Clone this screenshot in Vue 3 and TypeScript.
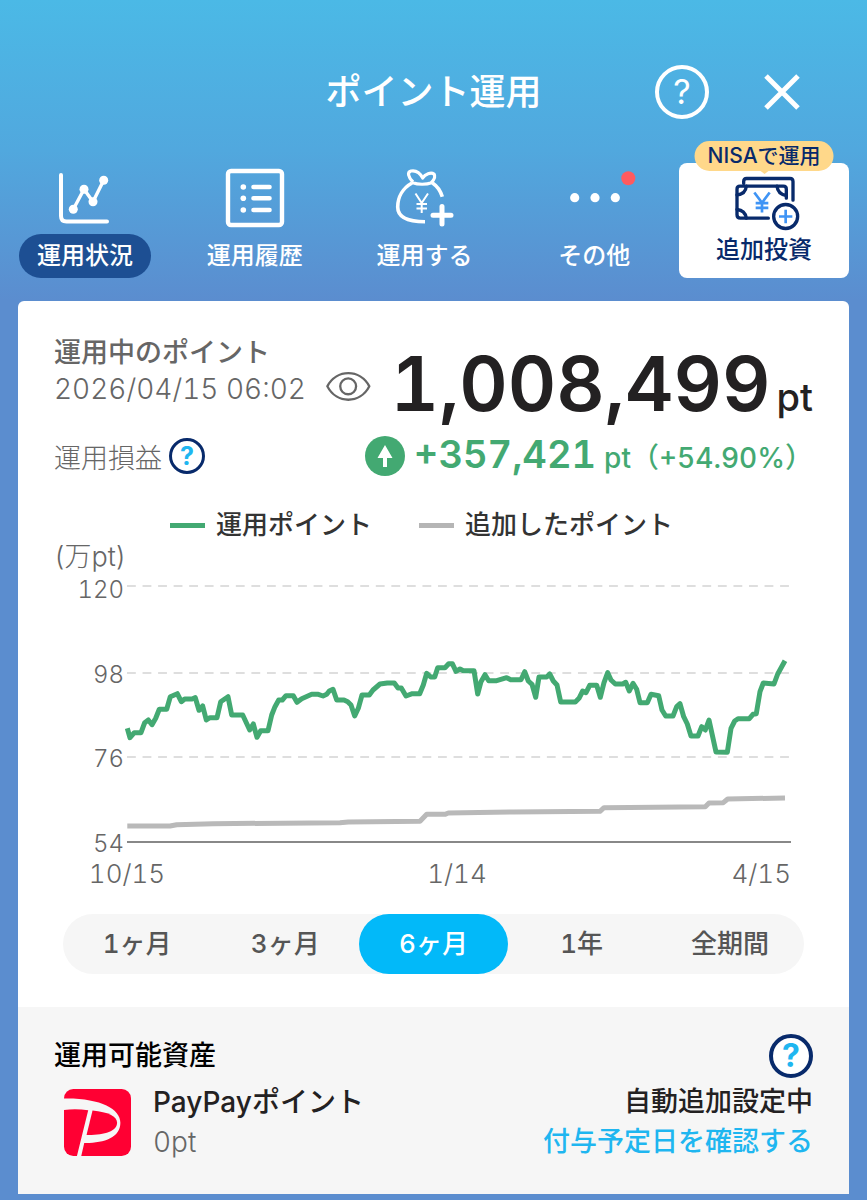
<script setup lang="ts">
import { ref } from 'vue'

type Point = [number, number]

const periods = ['1ヶ月', '3ヶ月', '6ヶ月', '1年', '全期間']
const selected = ref('6ヶ月')
const activeTab = ref('status')

// Series are sampled at three units per chart pixel.
const SAMPLE = 3
const invested: Point[] = [
  [262, 685], [270, 713], [283, 698], [303, 698], [314, 668], [325, 660], [336, 674], [347, 655],
  [358, 628], [380, 628], [391, 590], [412, 581], [424, 605], [434, 597], [456, 597], [466, 593],
  [477, 631], [488, 618], [499, 660], [510, 653], [531, 653], [542, 605], [564, 590], [575, 645],
  [608, 645], [629, 690], [640, 672], [651, 712], [662, 692], [684, 692], [695, 645], [705, 620],
  [716, 600], [727, 600], [738, 587], [760, 587], [771, 607], [785, 596], [815, 583], [835, 583],
  [849, 588], [860, 583], [868, 573], [879, 568], [890, 600], [912, 600], [923, 605], [933, 615],
  [944, 648], [955, 625], [966, 585], [988, 585], [999, 570], [1020, 552], [1042, 549], [1063, 549],
  [1074, 564], [1084, 564], [1098, 588], [1117, 581], [1139, 581], [1150, 555], [1160, 520],
  [1172, 531], [1184, 531], [1193, 503], [1215, 503], [1226, 491], [1237, 491], [1248, 514],
  [1260, 507], [1270, 512], [1302, 512], [1313, 582], [1323, 545], [1335, 524], [1346, 542],
  [1370, 542], [1400, 533], [1412, 539], [1443, 539], [1454, 515], [1465, 543], [1476, 553],
  [1487, 592], [1497, 531], [1520, 531], [1529, 522], [1540, 543], [1551, 555], [1562, 606],
  [1606, 606], [1617, 595], [1628, 573], [1638, 578], [1649, 556], [1670, 556], [1681, 592],
  [1692, 548], [1703, 518], [1713, 540], [1726, 552], [1748, 552], [1757, 547], [1768, 573],
  [1779, 550], [1790, 568], [1800, 608], [1822, 608], [1833, 583], [1856, 587], [1866, 630],
  [1877, 648], [1899, 648], [1910, 620], [1920, 611], [1931, 650], [1942, 672], [1953, 708],
  [1974, 708], [1985, 680], [1996, 690], [2007, 660], [2028, 756], [2062, 757], [2073, 685],
  [2084, 663], [2094, 656], [2128, 656], [2139, 643], [2149, 641], [2160, 575], [2170, 549],
  [2202, 552], [2213, 522], [2235, 482],
]
const added: Point[] = [
  [262, 978], [390, 978], [410, 974], [520, 971], [900, 968], [925, 966], [1140, 964], [1160, 943],
  [1215, 943], [1225, 939], [1420, 936], [1680, 934], [1692, 923], [1996, 920], [2007, 909],
  [2050, 908], [2063, 897], [2235, 894],
]

const toPoints = (series: Point[]): string =>
  series.map(([x, y]) => `${(x / SAMPLE - 14).toFixed(1)},${(y / SAMPLE - 70).toFixed(1)}`).join(' ')

const gridLines = [
  { label: '120', y: 16, baseline: 28 },
  { label: '98', y: 103, baseline: 113 },
  { label: '76', y: 187, baseline: 197 },
  { label: '54', y: 272, baseline: 282 },
]
</script>

<template>
  <div class="app">
    <header class="header">
      <h1 class="title">ポイント運用</h1>
      <div class="actions">
        <button class="help-light" type="button" aria-label="ヘルプ">?</button>
        <button class="close" type="button" aria-label="閉じる">
          <svg viewBox="0 0 36 36" width="36" height="36"><path d="M2 2L34 34M34 2L2 34" stroke="#fff" stroke-width="5" /></svg>
        </button>
      </div>
    </header>

    <nav class="tabs">
      <button class="tab" :class="{ active: activeTab === 'status' }" type="button" @click="activeTab = 'status'">
        <svg class="tab-icon" viewBox="0 0 60 60">
          <path d="M6 7V48Q6 53.5 11.5 53.5H52" stroke-width="4" />
          <path d="M18.3 41.3L29 21.3L38 33.7L48.7 12.3" stroke-width="3.4" />
          <g class="solid"><circle cx="18.3" cy="41.3" r="4.5" /><circle cx="29" cy="21.3" r="4.5" /><circle cx="38" cy="33.7" r="4.5" /><circle cx="48.7" cy="12.3" r="4.5" /></g>
        </svg>
        <span class="tab-label">運用状況</span>
      </button>
      <button class="tab" :class="{ active: activeTab === 'history' }" type="button" @click="activeTab = 'history'">
        <svg class="tab-icon" viewBox="0 0 60 60">
          <rect x="3" y="3" width="54" height="54" rx="3" stroke-width="4.4" />
          <path d="M28.5 19H44.5M28.5 30.3H44.5M28.5 42H44.5" stroke-width="4.6" />
          <g class="solid"><circle cx="18.3" cy="19" r="2.8" /><circle cx="18.3" cy="30.3" r="2.8" /><circle cx="18.3" cy="42" r="2.8" /></g>
        </svg>
        <span class="tab-label">運用履歴</span>
      </button>
      <button class="tab" :class="{ active: activeTab === 'invest' }" type="button" @click="activeTab = 'invest'">
        <svg class="tab-icon butt" viewBox="0 0 60 60">
          <path d="M18 15C9 20 3.7 29 3.7 39C3.7 50 14 53.7 31 53.7M38.5 15C43 18 46.500 23 48.3 28.7" stroke-width="3.6" />
          <path d="M18 14.5Q28 18 38.5 14.5M19 14C14 9 13 4 17 3C22 2 26 5 28.7 10C31 6 37 4 40 6C42 9 40 12 37 15" stroke-width="3.2" />
          <path d="M21.5 25.5L27.7 35L34 25.5M27.7 35V45M22.5 36H33M22.5 40.5H33" stroke-width="2" />
          <path class="round" d="M48 38.5V56M39 47.3H57" stroke-width="5" />
        </svg>
        <span class="tab-label">運用する</span>
      </button>
      <button class="tab" :class="{ active: activeTab === 'other' }" type="button" @click="activeTab = 'other'">
        <svg class="tab-icon" viewBox="0 0 60 60">
          <g class="solid"><circle cx="10.7" cy="29.7" r="4.6" /><circle cx="31" cy="29.7" r="4.6" /><circle cx="51.3" cy="29.7" r="4.6" /></g>
          <circle class="notice" cx="64.3" cy="10.3" r="7" />
        </svg>
        <span class="tab-label">その他</span>
      </button>
      <a class="nisa" href="#nisa">
        <span class="nisa-badge">NISAで運用</span>
        <svg class="nisa-icon" viewBox="334 408 198 164" width="66" height="55" fill="none" stroke="#082a6b" stroke-width="10" stroke-linecap="round">
          <path d="M372 430V424Q372 415 381 415H511Q520 415 520 424V480" />
          <path d="M446 534H362Q352 534 352 524V447Q352 438 361 438H491Q500 438 500 447V474" />
          <path d="M380 438Q378 462 352 464M472 438Q474 462 500 466M352 508Q376 510 380 534" />
          <circle cx="498" cy="529" r="36" />
          <g stroke="#3f94f5" stroke-width="8" stroke-linecap="butt">
            <path d="M478 529H518M498 509V549M404 457L427 488L450 457M427 487V517M408 489H446M408 503H446" />
          </g>
        </svg>
        <span class="nisa-label">追加投資</span>
      </a>
    </nav>

    <main class="card">
      <section class="overview">
        <div class="balance">
          <div>
            <h2 class="balance-title">運用中のポイント</h2>
            <div class="updated">
              <time datetime="2026-04-15T06:02">2026/04/15 06:02</time>
              <button class="eye" type="button" aria-label="表示を切り替える">
                <svg viewBox="880 146 136 93" width="45" height="31" fill="none" stroke="#666" stroke-width="7">
                  <path d="M884 192C912 139 983 139 1011 192C983 246 912 246 884 192Z" stroke-linejoin="round" />
                  <circle cx="947" cy="192" r="24" />
                </svg>
              </button>
            </div>
          </div>
          <p class="amount">1,008,499<span class="amount-unit">pt</span></p>
        </div>

        <div class="profit">
          <div class="profit-name">
            <span>運用損益</span>
            <button class="help" type="button" aria-label="運用損益について">?</button>
          </div>
          <p class="gain">
            <svg viewBox="0 0 40 40" width="40" height="40">
              <circle cx="20" cy="20" r="20" fill="#43a972" />
              <path d="M20 9L27.5 22H22V31H18V22H12.5Z" fill="#fff" />
            </svg>
            <span class="gain-text">+357,421<span class="gain-unit">pt</span><span class="gain-rate">（+54.90%）</span></span>
          </p>
        </div>

        <div class="legend">
          <span class="legend-item"><i class="swatch green"></i>運用ポイント</span>
          <span class="legend-item"><i class="swatch gray"></i>追加したポイント</span>
        </div>

        <div class="unit">(万pt)</div>
        <svg class="chart" viewBox="0 0 759 324" role="img" aria-label="運用ポイントの推移">
          <g v-for="(line, i) in gridLines" :key="line.label">
            <line x1="73" x2="737" :y1="line.y" :y2="line.y" pathLength="1281" :class="i === gridLines.length - 1 ? 'axis' : 'grid'" />
            <text class="y-label" x="70" :y="line.baseline">{{ line.label }}</text>
          </g>
          <polyline class="line-added" :points="toPoints(added)" />
          <polyline class="line-invested" :points="toPoints(invested)" />
          <text class="x-label" x="73" y="313" text-anchor="middle">10/15</text>
          <text class="x-label" x="403" y="313" text-anchor="middle">1/14</text>
          <text class="x-label" x="737" y="313" text-anchor="end">4/15</text>
        </svg>

        <div class="periods">
          <button
            v-for="period in periods"
            :key="period"
            class="period"
            :class="{ selected: period === selected }"
            :aria-pressed="period === selected"
            type="button"
            @click="selected = period"
          >{{ period }}</button>
        </div>
      </section>

      <section class="assets">
        <div class="assets-head">
          <h2 class="assets-title">運用可能資産</h2>
          <button class="help large" type="button" aria-label="運用可能資産について">?</button>
        </div>
        <div class="asset">
          <svg class="logo" viewBox="192 268 202 202" width="67" height="67">
            <rect x="192" y="268" width="202" height="202" rx="28" fill="#ff0033" />
            <path d="M192 297C300 295 362 328 362 370C362 415 312 432 253 431L244 470H231L265 332C240 328 215 328 192 331Z" fill="#f6f6f6" />
            <path d="M278 333C325 338 352 350 352 370C352 396 312 408 260 407Z" fill="#ff0033" />
          </svg>
          <div class="asset-info">
            <div class="asset-name">PayPayポイント</div>
            <div class="asset-value">0pt</div>
          </div>
          <div class="asset-status">
            <div class="asset-auto">自動追加設定中</div>
            <a class="asset-link" href="#schedule">付与予定日を確認する</a>
          </div>
        </div>
      </section>
    </main>
  </div>
</template>

<style>
body {
  margin: 0;
  background: #5b8dcf;
}
</style>

<style scoped>
.app {
  box-sizing: border-box;
  min-height: 100vh;
  padding-bottom: 6px;
  background: linear-gradient(#4bb9e6 0, #51a8de 150px, #5b8dcf 300px, #5b8dcf 100%);
  font-family: Inter, "Noto Sans CJK JP", sans-serif;
  font-weight: 500;
  font-variant-numeric: tabular-nums;
  color: #232122;
}
h1, h2, p { margin: 0; font-weight: 500; }
button {
  padding: 0;
  border: 0;
  background: none;
  font: inherit;
  font-variant-numeric: tabular-nums;
  color: inherit;
  cursor: pointer;
}
a { text-decoration: none; }
svg { display: block; }

.header {
  display: grid;
  grid-template-columns: 1fr auto 1fr;
  align-items: center;
  height: 72px;
  padding-top: 56px;
  color: #fff;
}
.title { grid-column: 2; font-size: 36px; line-height: 48px; }
.actions {
  display: flex;
  align-items: center;
  justify-content: flex-end;
  gap: 55px;
  padding-right: 67px;
}
.help-light {
  width: 54px;
  height: 54px;
  border: 4px solid #fff;
  border-radius: 50%;
  font-size: 34px;
  font-weight: 400;
  line-height: 46px;
}

.tabs {
  display: grid;
  grid-template-columns: repeat(5, 1fr);
  align-items: end;
  height: 150px;
  padding-right: 18px;
  margin-bottom: 23px;
  color: #fff;
}
.tab {
  display: flex;
  flex-direction: column;
  align-items: center;
  gap: 6px;
}
.tab-icon {
  width: 60px;
  height: 60px;
  overflow: visible;
  fill: none;
  stroke: #fff;
  stroke-linecap: round;
  stroke-linejoin: round;
}
.tab-icon.butt { stroke-linecap: butt; }
.tab-icon .round { stroke-linecap: round; }
.tab-icon .solid { fill: #fff; stroke: none; }
.tab-icon .notice { fill: #ff5a5f; stroke: none; }
.tab-label {
  padding: 0 18px;
  border-radius: 22px;
  font-size: 24px;
  line-height: 44px;
  white-space: nowrap;
}
.tab.active .tab-label { background: #1d4f93; }
.nisa {
  position: relative;
  display: flex;
  flex-direction: column;
  align-items: center;
  box-sizing: border-box;
  height: 115px;
  padding-top: 13px;
  border-radius: 8px;
  background: #fff;
  color: #082a6b;
}
.nisa-icon { overflow: visible; }
.nisa-badge {
  position: absolute;
  top: -22px;
  left: 50%;
  transform: translateX(-50%);
  padding: 0 13px;
  border-radius: 15px;
  background: #ffd88a;
  font-size: 21px;
  line-height: 30px;
  white-space: nowrap;
}
.nisa-badge::after {
  content: "";
  position: absolute;
  top: 100%;
  left: 50%;
  margin-left: -4px;
  border: 4px solid transparent;
  border-top: 3px solid #ffd88a;
  border-bottom: 0;
}
.nisa-label { font-size: 24px; line-height: 38px; }

.card {
  margin: 0 18px;
  border-radius: 6px 6px 0 0;
  background: #fff;
  overflow: hidden;
}
.overview { padding: 34px 36px 33px; }
.balance {
  display: flex;
  justify-content: space-between;
  height: 97px;
}
.balance-title { font-size: 27px; line-height: 36px; color: #666; }
.updated {
  display: flex;
  gap: 20px;
  font-size: 28px;
  font-weight: 300;
  line-height: 36px;
  color: #666;
  white-space: nowrap;
}
.eye { align-self: flex-start; }
.amount {
  font-size: 75px;
  font-weight: 600;
  line-height: 98px;
  white-space: nowrap;
}
.amount-unit { margin-left: 6px; font-size: 38px; font-weight: 500; }
.profit {
  display: flex;
  align-items: center;
  justify-content: space-between;
  height: 40px;
  margin-top: 4px;
}
.profit-name {
  display: flex;
  align-items: center;
  gap: 7px;
  font-size: 27px;
  font-weight: 300;
  color: #666;
}
.help {
  box-sizing: border-box;
  width: 36px;
  height: 36px;
  border: 3px solid #082a6b;
  border-radius: 50%;
  background: #fff;
  font-size: 25px;
  font-weight: 700;
  line-height: 30px;
  color: #1fb6f0;
}
.help.large {
  width: 44px;
  height: 44px;
  border-width: 4px;
  font-size: 32px;
  line-height: 36px;
}
.gain {
  display: flex;
  align-items: center;
  gap: 9px;
  color: #43a972;
}
.gain-text {
  font-size: 38px;
  font-weight: 600;
  line-height: 44px;
  white-space: nowrap;
}
.gain-unit { margin-left: 8px; font-size: 28px; font-weight: 500; }
.gain-rate { font-size: 28px; font-weight: 500; }

.legend {
  display: flex;
  justify-content: center;
  gap: 47px;
  margin-top: 31px;
  padding-right: 24px;
  font-size: 26px;
  line-height: 36px;
  color: #333;
  white-space: nowrap;
}
.legend-item { display: flex; align-items: center; gap: 11px; }
.swatch { width: 35px; height: 5px; }
.swatch.green { background: #43a972; }
.swatch.gray { background: #b5b5b5; }
.unit {
  font-size: 27px;
  font-weight: 300;
  line-height: 27px;
  color: #666;
}
.chart { width: 100%; height: auto; }
.grid { stroke: #dedede; stroke-width: 2; stroke-dasharray: 17 13; }
.axis { stroke: #888; stroke-width: 2; }
.y-label, .x-label { font-size: 24px; font-weight: 300; fill: #666; }
.y-label { text-anchor: end; }
.x-label { font-size: 26px; }
.line-added, .line-invested {
  fill: none;
  stroke-width: 5;
  stroke-linejoin: round;
}
.line-added { stroke: #b9b9b9; }
.line-invested { stroke: #43a972; }

.periods {
  display: grid;
  grid-template-columns: repeat(5, 1fr);
  margin: 20px 9px 0;
  border-radius: 30px;
  background: #f6f6f6;
}
.period {
  border-radius: 30px;
  font-size: 26px;
  line-height: 60px;
  color: #555;
}
.period.selected { background: #02b9f9; color: #fff; }

.assets {
  padding: 27px 36px 32px;
  background: #f6f6f6;
}
.assets-head {
  display: flex;
  align-items: center;
  justify-content: space-between;
}
.assets-title { font-size: 27px; line-height: 40px; color: #000; }
.asset {
  display: flex;
  align-items: center;
  gap: 22px;
  margin-top: 4px;
  padding-left: 10px;
  font-size: 27px;
  line-height: 40px;
}
.asset-info { flex: 1; font-size: 28px; }
.asset-value { font-weight: 300; color: #666; }
.asset-status { text-align: right; }
.asset-link { color: #1fb6f0; }
</style>
